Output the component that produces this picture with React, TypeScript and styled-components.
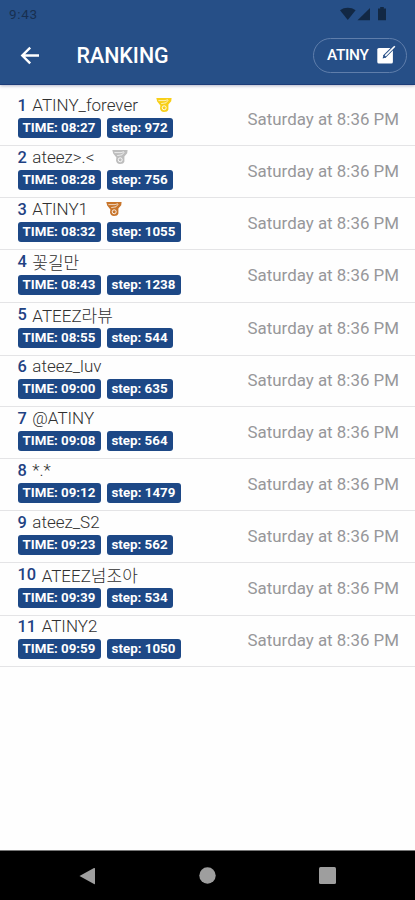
import React from 'react';
import styled, { createGlobalStyle } from 'styled-components';

const GlobalStyle = createGlobalStyle`
  * { box-sizing: border-box; }
  body { margin: 0; background: #fff; font-family: Roboto, "Noto Sans CJK KR", sans-serif; }
`;

const Screen = styled.div`
  display: flex;
  flex-direction: column;
  width: 415px;
  height: 900px;
  overflow: hidden;
  background: #fefefe;
`;

const Header = styled.header`
  flex: none;
  height: 85px;
  background: #264f87;
  border-bottom: 1px solid #1c3c78;
  box-shadow: 0 1px 3px rgba(40, 50, 100, 0.35);
`;

const StatusBar = styled.div`
  display: flex;
  align-items: center;
  height: 27px;
  padding: 0 28px 0 9px;
  color: #182f50;
  font-size: 13.5px;
  letter-spacing: 0.65px;
`;

const StatusIcons = styled.svg`
  display: block;
  margin-left: auto;
`;

const Toolbar = styled.div`
  display: flex;
  align-items: center;
  height: 57px;
  padding: 0 8px 0 19px;
  color: #fff;
`;

const BackIcon = styled.svg`
  display: block;
`;

const Title = styled.h1`
  margin: 0 0 0 35.5px;
  font-size: 21.4px;
  font-weight: 500;
  line-height: 28px;
`;

const UserButton = styled.button`
  display: flex;
  align-items: center;
  justify-content: space-between;
  width: 94px;
  height: 35px;
  margin-left: auto;
  padding: 0 10px 1px 13px;
  border: 1px solid #5f7eab;
  border-radius: 18px;
  background: transparent;
  color: #fff;
  font: 500 15.4px/20px Roboto, sans-serif;
  letter-spacing: -0.3px;
`;

const List = styled.ol`
  flex: 1;
  margin: 0;
  padding: 0;
  list-style: none;
`;

const Row = styled.li<{ $height: number }>`
  display: flex;
  align-items: flex-end;
  justify-content: space-between;
  height: ${(p) => p.$height}px;
  padding: 0 16px 7px 17.5px;
  border-bottom: 1px solid #e4e4e6;
`;

const Details = styled.div`
  display: flex;
  flex-direction: column;
`;

const NameLine = styled.div<{ $tall: boolean }>`
  display: flex;
  align-items: flex-start;
  height: ${(p) => (p.$tall ? 24 : 23)}px;
`;

const Rank = styled.span`
  margin-right: 5.5px;
  padding-top: 1px;
  color: #1f4283;
  font-size: 16.4px;
  font-weight: 500;
  line-height: 20px;
`;

const Name = styled.span<{ $tall: boolean }>`
  padding-top: ${(p) => (p.$tall ? 2 : 0)}px;
  color: #303030;
  font-size: 17px;
  font-weight: 300;
  line-height: 20px;
  white-space: nowrap;
`;

const Medal = styled.svg`
  display: block;
  margin: 2px 0 0 18px;
`;

const Tags = styled.div`
  display: flex;
  gap: 6px;
`;

const Tag = styled.span<{ $width: number }>`
  display: flex;
  align-items: center;
  justify-content: center;
  width: ${(p) => p.$width}px;
  height: 20.5px;
  border-radius: 3px;
  background: #1d4886;
  color: #fff;
  font-size: 13.35px;
  font-weight: 700;
  line-height: 20px;
  white-space: nowrap;
`;

const When = styled.time<{ $tall: boolean }>`
  margin-bottom: ${(p) => (p.$tall ? 10 : 9)}px;
  color: #97979a;
  font-size: 16.9px;
  line-height: 20px;
  white-space: nowrap;
`;

const NavBar = styled.nav`
  display: flex;
  flex: none;
  align-items: center;
  justify-content: space-between;
  height: 50px;
  padding: 0 79px;
  border-top: 1px solid #777;
  background: #000;
`;

const NavIcon = styled.svg`
  display: block;
  fill: #9e9e9e;
`;

interface Entry {
  name: string;
  time: string;
  step: number;
  height: number;
  medal?: string;
  tall?: boolean;
}

const entries: Entry[] = [
  { name: 'ATINY_forever', time: '08:27', step: 972, height: 61, medal: '#f8cf18' },
  { name: 'ateez>.<', time: '08:28', step: 756, height: 52, medal: '#bdbdbd' },
  { name: 'ATINY1', time: '08:32', step: 1055, height: 52, medal: '#c8752b' },
  { name: '꽃길만', time: '08:43', step: 1238, height: 53, tall: true },
  { name: 'ATEEZ라뷰', time: '08:55', step: 544, height: 53, tall: true },
  { name: 'ateez_luv', time: '09:00', step: 635, height: 51 },
  { name: '@ATINY', time: '09:08', step: 564, height: 52 },
  { name: '*.*', time: '09:12', step: 1479, height: 52 },
  { name: 'ateez_S2', time: '09:23', step: 562, height: 52 },
  { name: 'ATEEZ넘조아', time: '09:39', step: 534, height: 53, tall: true },
  { name: 'ATINY2', time: '09:59', step: 1050, height: 51 },
];

function MedalIcon({ color }: { color: string }) {
  return (
    <Medal width="16" height="16" viewBox="0 0 16 16">
      <path d="M.3 1H15.6L15.2 4.2 12.4 7.5V12.5Q11.7 15 8 15 4.4 14.8 4 11.2L4.4 8.4 1.2 4.6Z" fill={color} />
      <path d="M2.4 3.6h6.6l2.9-.9M5.2 6.6l4.8-.8 2.3-2.7" fill="none" stroke="#fff" strokeWidth=".7" />
      <circle cx="8.2" cy="10.8" r="2" fill="none" stroke="#fff" strokeWidth=".9" />
    </Medal>
  );
}

export default function App() {
  return (
    <Screen>
      <GlobalStyle />
      <Header>
        <StatusBar>
          <span>9:43</span>
          <StatusIcons width="47" height="14" viewBox="0 0 47 14" fill="#122844">
            <path d="M0 3.2C4.4-.1 11.2-.1 15.6 3.2L7.8 13Z" />
            <path d="M30 1V13.2H17.5Z" />
            <path d="M40.2 0h3.6v1.5H46V13.2H38V1.5h2.2Z" />
          </StatusIcons>
        </StatusBar>
        <Toolbar>
          <BackIcon width="22" height="22" viewBox="0 0 22 22" fill="none" stroke="#fff" strokeWidth="2.4">
            <path d="M20 10.5H3.5M11.2 2.6 3.3 10.5l7.9 7.9" />
          </BackIcon>
          <Title>RANKING</Title>
          <UserButton>
            <span>ATINY</span>
            <svg width="20" height="20" viewBox="0 0 20 20">
              <rect x="1.3" y="3" width="15.6" height="15.6" rx="1.6" fill="#fff" />
              <path d="M18.2 1.8 8.2 11.8" stroke="#264f87" strokeWidth="3.4" />
              <path d="M18.8 1.2 9.2 10.9" stroke="#fff" strokeWidth="1.6" />
              <path d="M6.6 13.4 7.5 10.2l2.4 2.2Z" fill="#264f87" />
            </svg>
          </UserButton>
        </Toolbar>
      </Header>
      <List>
        {entries.map((e, i) => (
          <Row key={e.name} $height={e.height}>
            <Details>
              <NameLine $tall={!!e.tall}>
                <Rank>{i + 1}</Rank>
                <Name $tall={!!e.tall}>{e.name}</Name>
                {e.medal && <MedalIcon color={e.medal} />}
              </NameLine>
              <Tags>
                <Tag $width={83}>TIME: {e.time}</Tag>
                <Tag $width={e.step > 999 ? 74 : 66}>step: {e.step}</Tag>
              </Tags>
            </Details>
            <When $tall={!!e.tall}>Saturday at 8:36 PM</When>
          </Row>
        ))}
      </List>
      <NavBar>
        <NavIcon width="17" height="18" viewBox="0 0 17 18"><path d="M.5 9 15 1Q16 .6 16 1.7V16.6Q16 17.6 15 17Z" /></NavIcon>
        <NavIcon width="17" height="17" viewBox="0 0 17 17"><circle cx="8.5" cy="8.5" r="8.2" /></NavIcon>
        <NavIcon width="17" height="17" viewBox="0 0 17 17"><rect width="17" height="17" rx="1.5" /></NavIcon>
      </NavBar>
    </Screen>
  );
}
